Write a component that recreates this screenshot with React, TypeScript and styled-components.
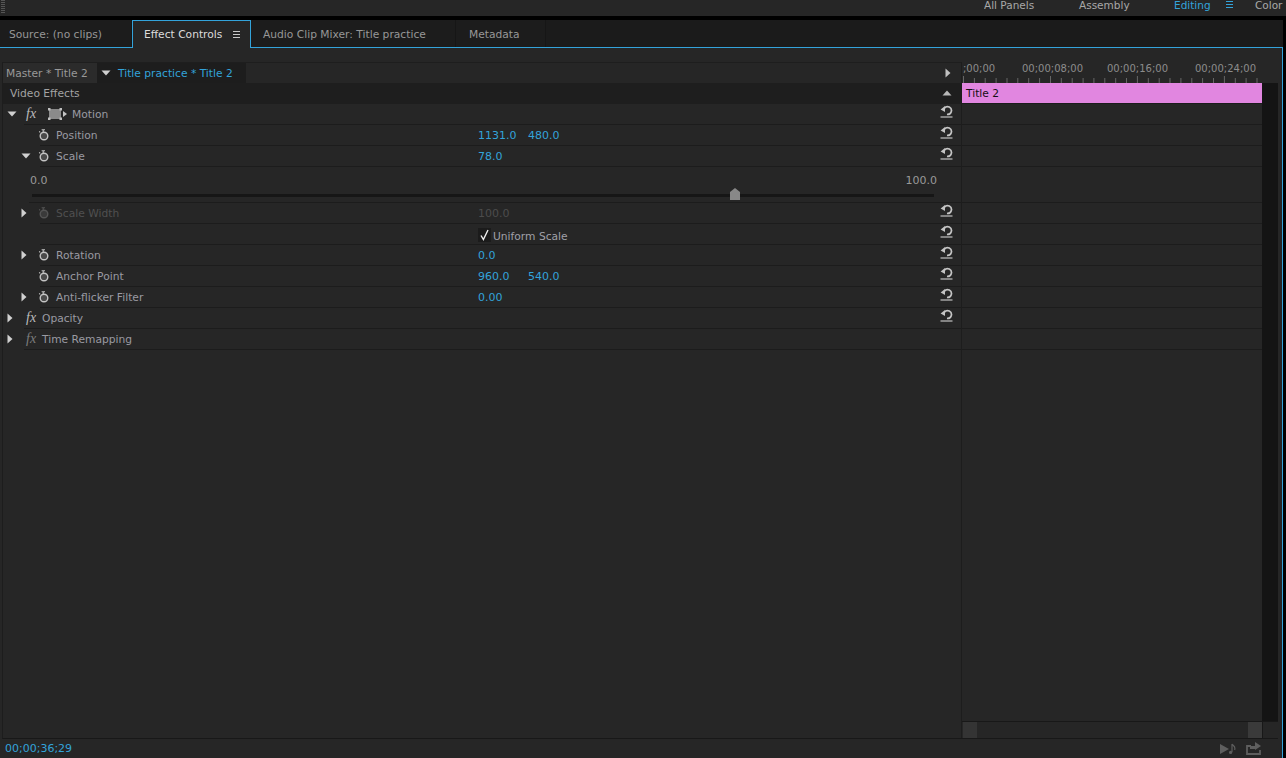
import React from "react";
import styled, { createGlobalStyle } from "styled-components";

const Global = createGlobalStyle`
  html, body { margin: 0; padding: 0; background: #000; overflow: hidden; }
  #root { width: 1286px; height: 758px; }
  * { box-sizing: border-box; }
`;

const BLUE = "#33a3da";
const FONT = `"DejaVu Sans", "Open Sans", "Liberation Sans", sans-serif`;

const Page = styled.div`
  width: 1286px; height: 758px; display: flex; flex-direction: column; overflow: hidden;
  background: #000; color: #a3a3a3; font: 10.7px/14px ${FONT};
`;
const Txt = styled.span`
  padding-top: 2px; white-space: nowrap;
`;
const TopBar = styled.header`
  height: 16px; flex: none; display: flex; align-items: flex-start; background: #262626; margin-bottom: 4px; overflow: hidden;
`;
const Grip = styled.div`
  width: 4px; height: 14px; flex: none; margin-left: 1px;
  background: repeating-linear-gradient(#555 0 1px, transparent 1px 2px);
`;
const Workspaces = styled.nav`
  margin-left: auto; display: flex; width: 302px; flex: none; height: 16px; overflow: hidden; margin-top: -2px;
`;
const Workspace = styled.span<{ $w: number; $active?: boolean }>`
  width: ${p => p.$w}px; flex: none; white-space: nowrap; font-size: 10.5px; color: ${p => (p.$active ? BLUE : "#a8a8a8")};
`;
const HamburgerBox = styled.span`
  width: 30px; flex: none; display: flex; padding-top: 2px;
`;
const Main = styled.main`
  flex: 1; min-height: 0; display: flex; flex-direction: column; margin-right: 3px; background: #262626;
`;
const TabRow = styled.div`
  height: 28px; flex: none; display: flex; background: #1b1b1b; border-bottom: 1px solid ${BLUE};
`;
const Tab = styled.div<{ $w: number; $pad: number; $active?: boolean }>`
  width: ${p => p.$w}px; flex: none; display: flex; align-items: center; gap: 10px; padding-left: ${p => p.$pad}px;
  white-space: nowrap; color: ${p => (p.$active ? "#dcdcdc" : "#979797")};
  ${p => p.$active
    ? `background:#262626; border:1px solid ${BLUE}; border-bottom:0; height:28px; z-index:1; padding-bottom:1px;`
    : `border-right:1px solid #161616; background:#1c1c1c;`}
`;
const Frame = styled.div`
  flex: 1; min-height: 0; display: flex; flex-direction: column; border-right: 1px solid ${BLUE}; padding: 14px 4px 0 2px;
`;
const Columns = styled.div`
  flex: 1; min-height: 0; display: flex; border-bottom: 1px solid #181818; border-left: 1px solid #1d1d1d;
`;
const LeftCol = styled.section`
  width: 959px; flex: none; display: flex; flex-direction: column; border-right: 1px solid #1d1d1d;
`;
const SeqBar = styled.div`
  height: 21px; flex: none; display: flex; align-items: stretch; background: #262626; border-top: 1px solid #1e1e1e;
  padding-right: 8px;
`;
const MasterTab = styled.div`
  width: 94px; flex: none; background: #2b2b2b; display: flex; align-items: center; padding-left: 3px; color: #999; white-space: nowrap;
`;
const ClipTab = styled.div`
  width: 149px; flex: none; background: #1d1d1d; display: flex; align-items: center; gap: 7px; padding-left: 4px; color: ${BLUE}; white-space: nowrap;
`;
const SeqArrow = styled.span`
  margin-left: auto; display: flex; align-items: center;
`;
const VideoHeader = styled.div`
  height: 21px; flex: none; background: #1e1e1e; display: flex; align-items: center; padding: 0 9px 2px 7px; color: #a3a3a3;
  justify-content: space-between;
`;
const Row = styled.div`
  height: 21px; flex: none; display: flex;
`;
const Gutter = styled.div<{ $w: number }>`
  width: ${p => p.$w}px; flex: none; display: flex; align-items: center; padding-bottom: 2px;
`;
const TwistSlot = styled.span<{ $x: number }>`
  display: flex; margin-left: ${p => p.$x}px;
`;
const RowBody = styled.div`
  flex: 1; min-width: 0; display: flex; align-items: center; border-bottom: 1px solid #1c1c1c; padding-right: 8px;
`;
const Label = styled(Txt)<{ $dim?: boolean; $ml: number }>`
  color: ${p => (p.$dim ? "#505050" : "#9a9aa2")}; margin-left: ${p => p.$ml}px; flex: none;
`;
const Fx = styled.i<{ $dim?: boolean; $mr: number }>`
  font: italic 14px/14px "Liberation Serif", serif; width: 14px; flex: none; color: ${p => (p.$dim ? "#7c7c7c" : "#bcbcbc")};
  margin-left: 2px; margin-right: ${p => p.$mr}px; padding-bottom: 1px;
`;
const WatchSlot = styled.span`
  display: flex; margin-left: -2px; flex: none;
`;
const NameCell = styled.div<{ $w: number }>`
  width: ${p => p.$w}px; flex: none; display: flex; align-items: center;
`;
const Values = styled.div`
  flex: 1; display: flex; align-items: center; padding-top: 1px;
`;
const Value = styled.span<{ $dim?: boolean }>`
  width: 50px; flex: none; color: ${p => (p.$dim ? "#4c4c4c" : BLUE)}; white-space: nowrap; font-size: 11px;
`;
const CheckGroup = styled.span`
  display: flex; align-items: center; padding-top: 3px;
`;
const CheckBox = styled.span`
  width: 13px; height: 14px; background: #1b1b1b; display: inline-flex; align-items: center; justify-content: center; margin-right: 2px; margin-top: -2px;
`;
const CheckLabel = styled(Txt)`
  color: #a0a0a8;
`;
const ResetSlot = styled.span`
  display: flex; flex: none; padding-bottom: 5px;
`;
const SliderRow = styled.div`
  height: 36px; flex: none; border-bottom: 1px solid #1c1c1c; margin-left: 26px; padding: 7px 27px 0 0; display: flex; flex-direction: column;
`;
const SliderLabels = styled.div`
  display: flex; justify-content: space-between; color: #999; padding-left: 1px; margin-right: -3px; font-size: 11px;
`;
const Track = styled.div`
  height: 3px; background: #161616; margin: 6px 0 0 3px; position: relative;
`;
const Thumb = styled.svg`
  position: absolute; top: -6px; left: 698px;
`;
const RightCol = styled.section`
  flex: 1; min-width: 0; display: flex; flex-direction: column;
`;
const Ruler = styled.div`
  height: 21px; flex: none; margin-right: 16px; position: relative; padding-top: 1px;
`;
const RulerLabels = styled.div`
  display: grid; grid-template-columns: 59px 59px 87px 88px; color: #8c8c8c; font-size: 10px; line-height: 12px; white-space: nowrap; padding-left: 1px;
`;
const RulerRight = styled.span`
  text-align: right;
`;
const Ticks = styled.svg`
  position: absolute; left: 0; bottom: 0;
`;
const TimelineArea = styled.div`
  flex: 1; min-height: 0; display: flex;
`;
const Tracks = styled.div`
  flex: 1; min-width: 0; display: flex; flex-direction: column;
`;
const VGutter = styled.div`
  width: 16px; flex: none; background: #141414;
`;
const Clip = styled.div`
  height: 21px; flex: none; background: #e186e0; border-bottom: 1px solid #1c1c1c; color: #141014; padding-left: 4px; display: flex; align-items: center;
`;
const TrackLine = styled.div<{ $h: number }>`
  height: ${p => p.$h}px; flex: none; border-bottom: 1px solid #1c1c1c;
`;
const HScroll = styled.div`
  height: 17px; flex: none; display: flex; border-top: 1px solid #181818;
`;
const ScrollEnd = styled.div`
  width: 14px; flex: none; margin-left: 1px; background: #343434;
`;
const ScrollTrack = styled.div`
  flex: 1; background: #262626;
`;
const ScrollThumb = styled.div`
  width: 14px; flex: none; background: #3a3a3a;
`;
const ScrollCorner = styled.div`
  width: 16px; flex: none; background: #262626; border-left: 1px solid #181818;
`;
const Footer = styled.footer`
  height: 19px; flex: none; display: flex; align-items: center; justify-content: space-between; padding: 0 17px 0 3px; color: ${BLUE}; font-size: 11px;
`;
const FooterIcons = styled.div`
  display: flex; gap: 10px; align-items: center;
`;

const Tri = ({ dir = "down", color = "#d0d0d0" }: { dir?: "down" | "right" | "up"; color?: string }) => (
  <svg width="10" height="10" viewBox="0 0 10 10">
    {dir === "down" && <path d="M0.5 2.5h9L5 7.5z" fill={color} />}
    {dir === "up" && <path d="M0.5 7.5h9L5 2.5z" fill={color} />}
    {dir === "right" && <path d="M2.5 0.5v9L7.5 5z" fill={color} />}
  </svg>
);
const Watch = ({ dim }: { dim?: boolean }) => {
  const c = dim ? "#555" : "#c4c4c4";
  return (
    <svg width="12" height="12" viewBox="0 0 12 12" style={{ flex: "none" }}>
      <circle cx="6" cy="7" r="3.8" fill={dim ? "#3a3a3a" : "#4a4a4a"} stroke={c} strokeWidth="1.4" />
      <path d="M3.6 0.8h3.4M5.2 1v2M1.2 2.4l1 1" stroke={c} strokeWidth="1.1" fill="none" />
    </svg>
  );
};
const Reset = () => (
  <svg width="13" height="13" viewBox="0 0 13 13">
    <path d="M4.4 3.2A3.9 3.9 0 1 1 7 9.4" fill="none" stroke="#c4c4c4" strokeWidth="1.7" />
    <path d="M0.6 4.4L5 1v6z" fill="#c4c4c4" />
    <path d="M0.5 12h12" stroke="#d0d0d0" strokeWidth="1.1" />
  </svg>
);
const MotionIcon = () => (
  <svg width="22" height="12" viewBox="0 0 22 12" style={{ flex: "none" }}>
    <rect x="1" y="1" width="12" height="10" fill="#8a8a8a" />
    <path d="M0 0h2.5v2.5H0zM11.5 0H14v2.5h-2.5zM0 9.5h2.5V12H0zM11.5 9.5H14V12h-2.5z" fill="#c0c0c0" />
    <path d="M15 3v6l4-3z" fill="#c4c4c4" />
  </svg>
);
const Burger = ({ color }: { color: string }) => (
  <svg width="9" height="9" viewBox="0 0 9 9">
    <path d="M1 1.5h7M1 4.5h7M1 7.5h7" stroke={color} strokeWidth="1" />
  </svg>
);

type P = {
  gutter: number; tw?: "down" | "right"; twX?: number; name?: string; dim?: boolean;
  values?: string[]; valDim?: boolean; reset?: boolean; check?: boolean; kind?: "prop" | "fx" | "fxdim" | "motion";
};
const PROPS: P[] = [
  { gutter: 21, tw: "down", twX: 4, kind: "motion", name: "Motion", reset: true },
  { gutter: 37, kind: "prop", name: "Position", values: ["1131.0", "480.0"], reset: true },
  { gutter: 37, tw: "down", twX: 18, kind: "prop", name: "Scale", values: ["78.0"], reset: true },
];
const PROPS2: P[] = [
  { gutter: 37, tw: "right", twX: 16, kind: "prop", name: "Scale Width", dim: true, values: ["100.0"], valDim: true, reset: true },
  { gutter: 37, check: true, reset: true },
  { gutter: 37, tw: "right", twX: 16, kind: "prop", name: "Rotation", values: ["0.0"], reset: true },
  { gutter: 37, kind: "prop", name: "Anchor Point", values: ["960.0", "540.0"], reset: true },
  { gutter: 37, tw: "right", twX: 16, kind: "prop", name: "Anti-flicker Filter", values: ["0.00"], reset: true },
  { gutter: 21, tw: "right", twX: 2, kind: "fx", name: "Opacity", reset: true },
  { gutter: 21, tw: "right", twX: 2, kind: "fxdim", name: "Time Remapping" },
];

const PropRow = ({ p }: { p: P }) => (
  <Row>
    <Gutter $w={p.gutter}>
      {p.tw && <TwistSlot $x={p.twX ?? 0}><Tri dir={p.tw} /></TwistSlot>}
    </Gutter>
    <RowBody>
      <NameCell $w={478 - 3 - p.gutter}>
        {p.kind === "prop" && <WatchSlot><Watch dim={p.dim} /></WatchSlot>}
        {p.kind === "prop" && p.name && <Label $ml={6} $dim={p.dim}>{p.name}</Label>}
        {p.kind === "motion" && (
          <>
            <Fx $mr={8}>fx</Fx>
            <MotionIcon />
            <Label $ml={2}>{p.name}</Label>
          </>
        )}
        {(p.kind === "fx" || p.kind === "fxdim") && (
          <>
            <Fx $mr={2} $dim={p.kind === "fxdim"}>fx</Fx>
            <Label $ml={0}>{p.name}</Label>
          </>
        )}
      </NameCell>
      <Values>
        {p.check && (
          <CheckGroup>
            <CheckBox>
              <svg width="11" height="12" viewBox="0 0 11 12">
                <path d="M2 6.5l2.4 4L9 1" fill="none" stroke="#eee" strokeWidth="1.4" />
              </svg>
            </CheckBox>
            <CheckLabel>Uniform Scale</CheckLabel>
          </CheckGroup>
        )}
        {p.values?.map(v => <Value key={v} $dim={p.valDim}>{v}</Value>)}
      </Values>
      {p.reset && <ResetSlot><Reset /></ResetSlot>}
    </RowBody>
  </Row>
);

const trackHeights = [21, 21, 21, 36, 21, 21, 21, 21, 21, 21, 21];
const tickPath = Array.from({ length: 29 })
  .map((_, i) => {
    const x = 1.5 + i * 10.87;
    const major = i % 8 === 0;
    return `M${x.toFixed(1)} ${major ? 0 : 2}V7`;
  })
  .join("");

export default function App() {
  return (
    <Page>
      <Global />
      <TopBar>
        <Grip />
        <Workspaces>
          <Workspace $w={95}>All Panels</Workspace>
          <Workspace $w={95}>Assembly</Workspace>
          <Workspace $w={51} $active>Editing</Workspace>
          <HamburgerBox><Burger color={BLUE} /></HamburgerBox>
          <Workspace $w={31}>Color</Workspace>
        </Workspaces>
      </TopBar>
      <Main>
        <TabRow>
          <Tab $w={132} $pad={9}><Txt>Source: (no clips)</Txt></Tab>
          <Tab $w={119} $pad={11} $active><Txt>Effect Controls</Txt> <Burger color="#c8c8c8" /></Tab>
          <Tab $w={205} $pad={12}><Txt>Audio Clip Mixer: Title practice</Txt></Tab>
          <Tab $w={90} $pad={13}><Txt>Metadata</Txt></Tab>
        </TabRow>
        <Frame>
          <Columns>
            <LeftCol>
              <SeqBar>
                <MasterTab><Txt>Master * Title 2</Txt></MasterTab>
                <ClipTab><Tri /> <Txt>Title practice * Title 2</Txt></ClipTab>
                <SeqArrow><Tri dir="right" color="#c0c0c0" /></SeqArrow>
              </SeqBar>
              <VideoHeader>
                <Txt>Video Effects</Txt>
                <Tri dir="up" color="#b8b8b8" />
              </VideoHeader>
              {PROPS.map(p => <PropRow key={p.name} p={p} />)}
              <SliderRow>
                <SliderLabels><span>0.0</span><span>100.0</span></SliderLabels>
                <Track>
                  <Thumb width="10" height="12" viewBox="0 0 10 12">
                    <path d="M0 12V4L5 0l5 4v8z" fill="#888" />
                  </Thumb>
                </Track>
              </SliderRow>
              {PROPS2.map((p, i) => <PropRow key={i} p={p} />)}
            </LeftCol>
            <RightCol>
              <Ruler>
                <RulerLabels>
                  <span>;00;00</span>
                  <RulerRight>00;00;08;00</RulerRight>
                  <RulerRight>00;00;16;00</RulerRight>
                  <RulerRight>00;00;24;00</RulerRight>
                </RulerLabels>
                <Ticks width="300" height="7" viewBox="0 0 300 7">
                  <path d={tickPath} stroke="#666" strokeWidth="1" fill="none" />
                </Ticks>
              </Ruler>
              <TimelineArea>
                <Tracks>
                  <Clip><Txt>Title 2</Txt></Clip>
                  {trackHeights.map((h, i) => <TrackLine key={i} $h={h} />)}
                </Tracks>
                <VGutter />
              </TimelineArea>
              <HScroll>
                <ScrollEnd />
                <ScrollTrack />
                <ScrollThumb />
                <ScrollCorner />
              </HScroll>
            </RightCol>
          </Columns>
          <Footer>
            00;00;36;29
            <FooterIcons>
              <svg width="16" height="12" viewBox="0 0 16 12">
                <path d="M0 1v10l9-5z" fill="#5e5e5e" />
                <path d="M12 1v8M12 1c1 2 4 2 2.6 6" fill="none" stroke="#5e5e5e" strokeWidth="1.2" />
                <circle cx="10.6" cy="9.4" r="1.6" fill="#5e5e5e" />
              </svg>
              <svg width="15" height="13" viewBox="0 0 15 13">
                <path d="M5 4H1v8h13V8" fill="none" stroke="#5e5e5e" strokeWidth="1.8" />
                <path d="M4 7V4h5V0l6 4-6 4V7z" fill="#5e5e5e" />
              </svg>
            </FooterIcons>
          </Footer>
        </Frame>
      </Main>
    </Page>
  );
}
